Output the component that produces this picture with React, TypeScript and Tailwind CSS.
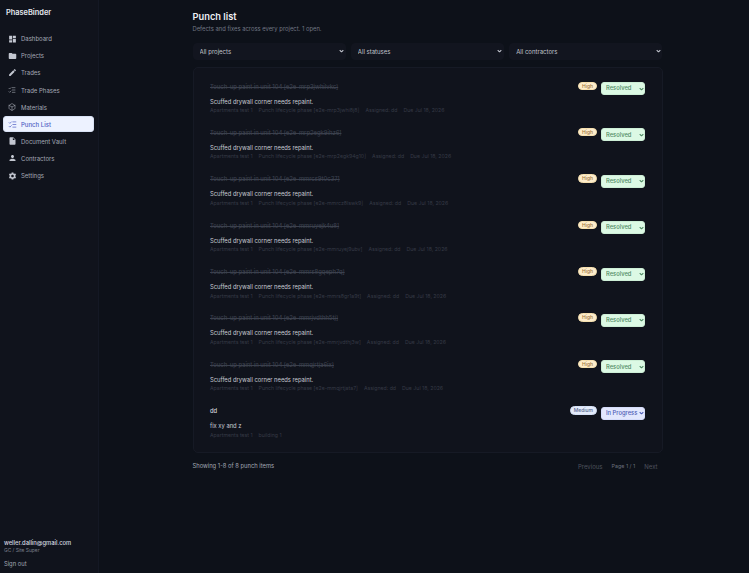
import { Box, ListChecks } from "lucide-react";
import { MdDashboard, MdEdit, MdFolder, MdInsertDriveFile, MdPerson, MdSettings } from "react-icons/md";

const navItems = [
  { label: "Dashboard", icon: <MdDashboard size={10} /> },
  { label: "Projects", icon: <MdFolder size={10} /> },
  { label: "Trades", icon: <MdEdit size={9} /> },
  { label: "Trade Phases", icon: <ListChecks size={8} strokeWidth={1.5} /> },
  { label: "Materials", icon: <Box size={8} strokeWidth={1.5} /> },
  { label: "Punch List", icon: <ListChecks size={9} strokeWidth={2} />, active: true },
  { label: "Document Vault", icon: <MdInsertDriveFile size={10} /> },
  { label: "Contractors", icon: <MdPerson size={10} /> },
  { label: "Settings", icon: <MdSettings size={10} /> },
];

const items = [
  { code: "e2e-mrp3jwhilvkc", phase: "e2e-mrp3jwhi8j8" },
  { code: "e2e-mrp2egk9ihz6", phase: "e2e-mrp2egk94g10" },
  { code: "e2e-mmrcs9t0c37", phase: "e2e-mmrcz8lswk9" },
  { code: "e2e-mmruyejk4u8", phase: "e2e-mmruyej9ubv" },
  { code: "e2e-mmrs8gqeph7q", phase: "e2e-mmrs8gr1a9t" },
  { code: "e2e-mmrjvdthh5tj", phase: "e2e-mmrjvdthj3w" },
  { code: "e2e-mmqjrtja6ix", phase: "e2e-mmqjrtjata7" },
];

const filters = ["All projects", "All statuses", "All contractors"];

const Chevron = ({ className }: { className: string }) => (
  <svg
    viewBox="0 0 8 5"
    className={`pointer-events-none absolute top-1/2 h-[3px] w-[5px] -translate-y-1/2 ${className}`}
    fill="none"
    stroke="currentColor"
    strokeWidth="1.8"
  >
    <path d="M1 1l3 3 3-3" />
  </svg>
);

const Sidebar = () => (
  <aside className="flex w-[99px] shrink-0 flex-col border-r border-[#141824] bg-[#10131c] pt-[8px] pr-[4px] pb-[4px] pl-[3px]">
    <div className="px-[3px] text-[7.4px] leading-[9px] font-semibold text-[#e4e7ee]">PhaseBinder</div>
    <nav className="mt-[14px] flex flex-col gap-[1.6px]">
      {navItems.map((item) => (
        <div
          key={item.label}
          className={`flex h-[15.5px] items-center gap-[4.5px] rounded-[3px] pl-[3.5px] text-[6px] ${
            item.active
              ? "border border-[#d9e2f5] bg-[#edf2ff] font-medium text-[#4f5fc4]"
              : "border border-transparent text-[#a3a8b5]"
          }`}
        >
          <span className={`flex w-[9px] justify-center ${item.active ? "text-[#5a68c8]" : "text-[#c3c7d1]"}`}>{item.icon}</span>
          {item.label}
        </div>
      ))}
    </nav>
    <div className="mt-auto px-[1px]">
      <div className="text-[5.8px] leading-[8px] font-medium text-[#d6d9e0]">weller.dallin@gmail.com</div>
      <div className="text-[4.9px] leading-[7px] text-[#7a7f8c]">GC / Site Super</div>
      <div className="mt-[6px] mb-[1px] text-[5.8px] leading-[8px] text-[#a3a8b5]">Sign out</div>
    </div>
  </aside>
);

const Row = ({
  title,
  done,
  body,
  meta,
  badge,
  status,
}: {
  title: string;
  done: boolean;
  body: string;
  meta: string[];
  badge: string;
  status: string;
}) => (
  <div className="flex h-[46.4px] items-start justify-between">
    <div className="pt-[0.5px]">
      <div className={`text-[5.8px] leading-[9px] font-medium ${done ? "text-[#3b404d] line-through" : "text-[#cfd2da]"}`}>{title}</div>
      <div className="mt-[6px] text-[5.8px] leading-[9px] text-[#c7cad2]">{body}</div>
      <div className="mt-[0.5px] flex gap-[6px] text-[5.2px] leading-[8px] text-[#363a46]">
        {meta.map((m) => (
          <span key={m}>{m}</span>
        ))}
      </div>
    </div>
    <div className="flex items-start gap-[4px]">
      <span
        className={`mt-[0.5px] rounded-full border px-[2.5px] text-[5px] leading-[6.5px] font-medium ${
          done ? "border-[#f5dfae] bg-[#fdeccb] text-[#a1763a]" : "border-[#d5e0f5] bg-[#e3ebfa] text-[#56678f]"
        }`}
      >
        {badge}
      </span>
      <div className={`relative mt-[1px] ${done ? "text-[#4f8a63]" : "text-[#4c5cb5]"}`}>
        <select
          defaultValue={status}
          className={`block h-[13px] w-[44px] appearance-none rounded-[3px] border pl-[4.5px] text-[5.8px] font-medium outline-none ${
            done ? "border-[#cdeed6] bg-[#dcf9e4]" : "border-[#d5dcfa] bg-[#e2e7fd]"
          }`}
        >
          <option>Resolved</option>
          <option>In Progress</option>
        </select>
        <Chevron className="right-[0.8px]" />
      </div>
    </div>
  </div>
);

const App = () => (
  <div className="flex h-[573px] w-[749px] overflow-hidden bg-[#0d1119] font-['Inter',sans-serif]">
    <Sidebar />
    <main className="ml-[93.5px] w-[470px] pt-[11px]">
      <h1 className="text-[9.3px] leading-[12px] font-semibold text-[#eceef2]">Punch list</h1>
      <p className="mt-[2px] text-[5.85px] leading-[8px] text-[#717683]">Defects and fixes across every project. 1 open.</p>
      <div className="mt-[10px] grid grid-cols-3 gap-[5px]">
        {filters.map((f) => (
          <div key={f} className="relative text-[#c0c3cc]">
            <select className="block h-[16.5px] w-full appearance-none rounded-[4px] border border-[#12151f] bg-[#12151f] pl-[6px] text-[6px] outline-none">
              <option>{f}</option>
            </select>
            <Chevron className="right-[1.8px]" />
          </div>
        ))}
      </div>
      <section className="mt-[7.5px] h-[386px] rounded-[5px] border border-[#161a25] bg-[#10131c] pt-[13px] pr-[17px] pl-[16.5px]">
        {items.map((it) => (
          <Row
            key={it.code}
            title={`Touch-up paint in unit 104 [${it.code}]`}
            done
            body="Scuffed drywall corner needs repaint."
            meta={["Apartments test 1", `Punch lifecycle phase [${it.phase}]`, "Assigned: dd", "Due Jul 18, 2026"]}
            badge="High"
            status="Resolved"
          />
        ))}
        <Row
          title="dd"
          done={false}
          body="fix xy and z"
          meta={["Apartments test 1", "building 1"]}
          badge="Medium"
          status="In Progress"
        />
      </section>
      <div className="mt-[9px] flex items-center justify-between">
        <span className="text-[5.8px] text-[#a3a8b5]">Showing 1-8 of 8 punch items</span>
        <div className="flex items-center gap-[9px] pr-[5px] text-[6px] text-[#4d515d]">
          <span>Previous</span>
          <span className="text-[5.4px] text-[#6b6f7b]">Page 1 / 1</span>
          <span>Next</span>
        </div>
      </div>
    </main>
  </div>
);

export default App;
